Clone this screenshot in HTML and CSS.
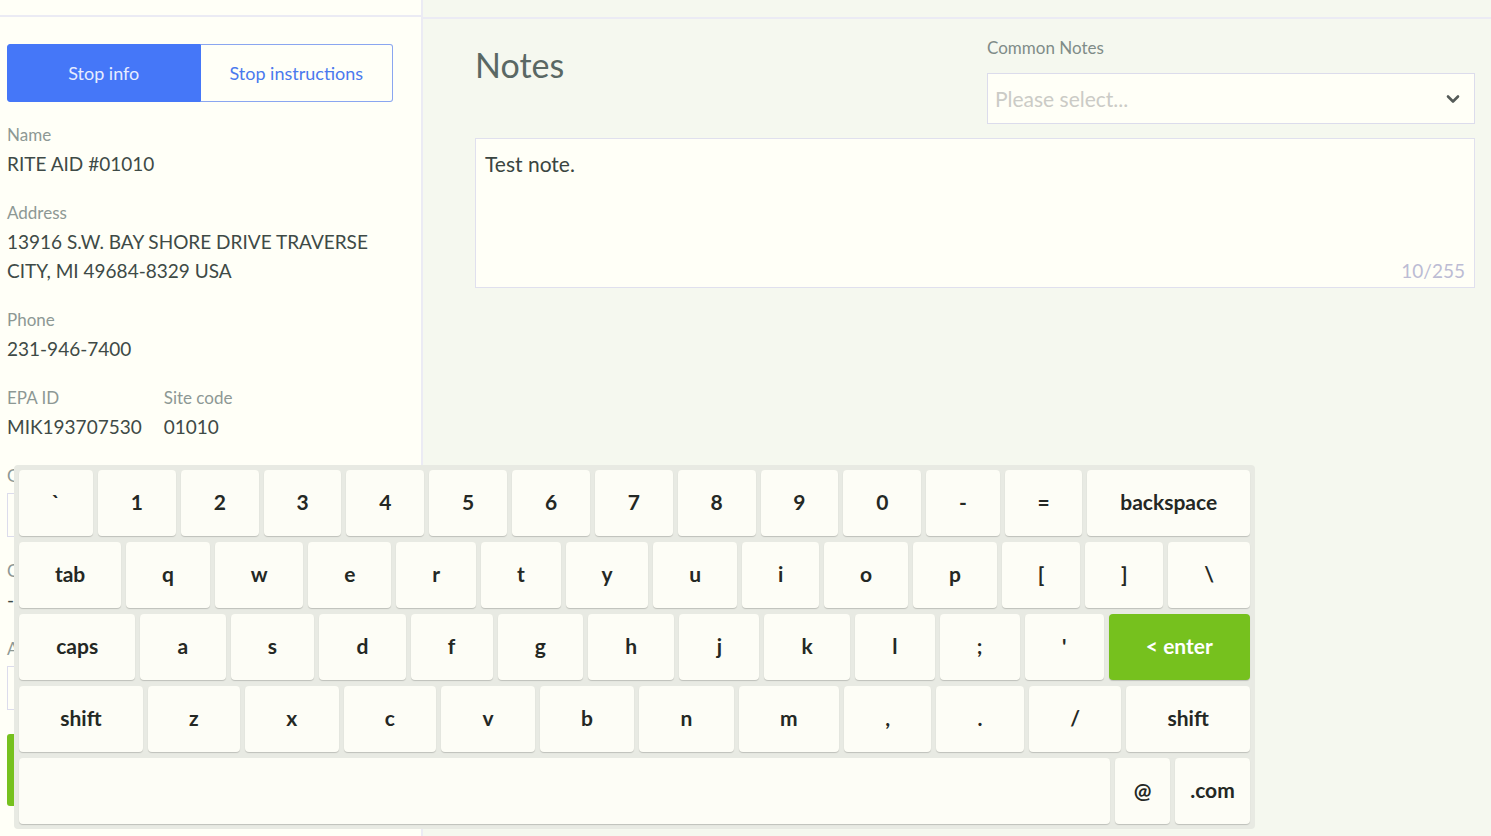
FILE: index.html
```html
<!DOCTYPE html>
<html lang="en">
<head>
    <meta charset="UTF-8">
    <meta name="viewport" content="width=device-width, initial-scale=1.0">
    <title>Stop - Notes</title>
    <link rel="stylesheet" href="styles.css">
</head>
<body>
    <div class="page">
        <div class="sidebar">
            <div class="sidebar-top"></div>
            <div class="sidebar-body">
                <div class="tabs">
                    <button class="tab tab-active">Stop info</button>
                    <button class="tab">Stop instructions</button>
                </div>

                <div class="field">
                    <div class="field-label">Name</div>
                    <div class="field-value">RITE AID #01010</div>
                </div>
                <div class="field">
                    <div class="field-label">Address</div>
                    <div class="field-value">13916 S.W. BAY SHORE DRIVE TRAVERSE CITY, MI 49684-8329 USA</div>
                </div>
                <div class="field">
                    <div class="field-label">Phone</div>
                    <div class="field-value">231-946-7400</div>
                </div>
                <div class="field-row">
                    <div class="field">
                        <div class="field-label">EPA ID</div>
                        <div class="field-value">MIK193707530</div>
                    </div>
                    <div class="field">
                        <div class="field-label">Site code</div>
                        <div class="field-value">01010</div>
                    </div>
                </div>

                <!-- hidden under the keyboard -->
                <div class="field field-tight">
                    <div class="field-label">G</div>
                    <div class="fake-input"></div>
                </div>
                <div class="field">
                    <div class="field-label">C</div>
                    <div class="field-value">-</div>
                </div>
                <div class="field">
                    <div class="field-label">A</div>
                    <div class="fake-input"></div>
                </div>
                <button class="save-button"></button>
            </div>
        </div>

        <div class="main">
            <div class="main-top"></div>
            <div class="notes">
                <div class="notes-head">
                    <h2 class="notes-title">Notes</h2>
                    <div class="common-notes">
                        <div class="common-label">Common Notes</div>
                        <div class="select">
                            <span class="select-placeholder">Please select...</span>
                            <svg class="select-arrow" width="14" height="10" viewBox="0 0 14 10">
                                <path d="M2 2.5 L7 7.5 L12 2.5" fill="none" stroke="#555b58" stroke-width="2.6" stroke-linecap="round" stroke-linejoin="round"/>
                            </svg>
                        </div>
                    </div>
                </div>
                <div class="note-box">
                    <div class="note-text">Test note.</div>
                    <div class="note-count">10/255</div>
                </div>
            </div>
        </div>
    </div>

    <div class="keyboard">
        <div class="kb-row">
            <div class="key">`</div>
            <div class="key">1</div>
            <div class="key">2</div>
            <div class="key">3</div>
            <div class="key">4</div>
            <div class="key">5</div>
            <div class="key">6</div>
            <div class="key">7</div>
            <div class="key">8</div>
            <div class="key">9</div>
            <div class="key">0</div>
            <div class="key">-</div>
            <div class="key">=</div>
            <div class="key">backspace</div>
        </div>
        <div class="kb-row">
            <div class="key">tab</div>
            <div class="key">q</div>
            <div class="key">w</div>
            <div class="key">e</div>
            <div class="key">r</div>
            <div class="key">t</div>
            <div class="key">y</div>
            <div class="key">u</div>
            <div class="key">i</div>
            <div class="key">o</div>
            <div class="key">p</div>
            <div class="key">[</div>
            <div class="key">]</div>
            <div class="key">\</div>
        </div>
        <div class="kb-row">
            <div class="key">caps</div>
            <div class="key">a</div>
            <div class="key">s</div>
            <div class="key">d</div>
            <div class="key">f</div>
            <div class="key">g</div>
            <div class="key">h</div>
            <div class="key">j</div>
            <div class="key">k</div>
            <div class="key">l</div>
            <div class="key">;</div>
            <div class="key">'</div>
            <div class="key key-enter">&lt; enter</div>
        </div>
        <div class="kb-row">
            <div class="key">shift</div>
            <div class="key">z</div>
            <div class="key">x</div>
            <div class="key">c</div>
            <div class="key">v</div>
            <div class="key">b</div>
            <div class="key">n</div>
            <div class="key">m</div>
            <div class="key">,</div>
            <div class="key">.</div>
            <div class="key">/</div>
            <div class="key">shift</div>
        </div>
        <div class="kb-row">
            <div class="key key-space"></div>
            <div class="key key-at">@</div>
            <div class="key key-com">.com</div>
        </div>
    </div>
</body>
</html>
```

FILE: styles.css
```css
body {
    margin: 0;
    font-family: 'Lato', 'Liberation Sans', sans-serif;
    color: #3e4a46;
    overflow: hidden;
}
.page {
    display: flex;
    height: 836px;
}
.sidebar {
    width: 421px;
    flex: none;
    background: #fffff7;
    border-right: 2px solid #ebebf4;
}
.sidebar-top {
    height: 15px;
    border-bottom: 2px solid #ebebf4;
}
.sidebar-body {
    padding: 27px 0 0 7px;
}
.tabs {
    display: flex;
    width: 386px;
    height: 58px;
    margin-bottom: 22px;
}
.tab {
    flex: 1;
    font-family: 'Lato', 'Liberation Sans', sans-serif;
    font-size: 18px;
    color: #4a79ee;
    background: #fffff7;
    border: 1px solid #8aa6f0;
    border-left: none;
    border-radius: 0 3px 3px 0;
    cursor: pointer;
}
.tab-active {
    color: #e6ecff;
    background: #4577f8;
    border: 1px solid #4577f8;
    border-radius: 3px 0 0 3px;
}
.field {
    margin-bottom: 24px;
}
.field-tight {
    margin-bottom: 23px;
}
.field-label {
    font-size: 17px;
    line-height: 22px;
    color: #8d9894;
    margin-bottom: 3px;
}
.field-value {
    font-size: 19px;
    line-height: 29px;
    color: #3e4a46;
    width: 380px;
}
.field-row {
    display: flex;
    gap: 22px;
}
.field-row .field-value {
    width: auto;
}
.fake-input {
    width: 300px;
    height: 42px;
    margin-top: 6px;
    border: 1px solid #dcdcec;
    background: #fffff7;
}
.save-button {
    display: block;
    width: 300px;
    height: 72px;
    background: #76c11e;
    border: none;
    border-radius: 3px;
}
.main {
    flex: 1;
    background: #f5f8ef;
}
.main-top {
    height: 17px;
    border-bottom: 2px solid #ebebf4;
}
.notes {
    padding: 18px 16px 0 52px;
}
.notes-head {
    display: flex;
    justify-content: space-between;
    align-items: flex-start;
    margin-bottom: 14px;
}
.notes-title {
    margin: 6px 0 0 0;
    font-size: 34px;
    line-height: 44px;
    font-weight: 400;
    color: #5a6864;
}
.common-notes {
    width: 488px;
}
.common-label {
    font-size: 17px;
    line-height: 22px;
    color: #7f8c88;
    margin-bottom: 14px;
}
.select {
    display: flex;
    align-items: center;
    justify-content: space-between;
    height: 49px;
    padding: 0 14px 0 7px;
    border: 1px solid #dcdcec;
    background: #fffff7;
}
.select-placeholder {
    font-size: 21px;
    color: #cbcbc6;
}
.note-box {
    position: relative;
    height: 148px;
    border: 1px solid #e0e0ee;
    background: #fffff7;
}
.note-text {
    padding: 12px 9px;
    font-size: 21px;
    line-height: 26px;
    color: #3a4541;
}
.note-count {
    position: absolute;
    right: 9px;
    bottom: 5px;
    font-size: 19px;
    line-height: 22px;
    color: #bcbcd4;
}
.keyboard {
    position: absolute;
    left: 14px;
    top: 465px;
    width: 1231px;
    padding: 5px;
    background: #e8eae3;
    border-radius: 4px;
    display: flex;
    flex-direction: column;
    gap: 6px;
}
.kb-row {
    display: flex;
    gap: 5px;
    height: 66px;
}
.key {
    flex: 1 1 auto;
    display: flex;
    align-items: center;
    justify-content: center;
    padding: 0 4px 3px;
    background: #fdfdf6;
    border-radius: 4px;
    box-shadow: 0 1px 1px rgba(0, 0, 0, 0.18);
    font-size: 21px;
    font-weight: 700;
    color: #242824;
}
.key-enter {
    background: #76c11e;
    color: #fff;
}
.key-at {
    flex: none;
    width: 47px;
}
.key-com {
    flex: none;
    width: 67px;
}
```
